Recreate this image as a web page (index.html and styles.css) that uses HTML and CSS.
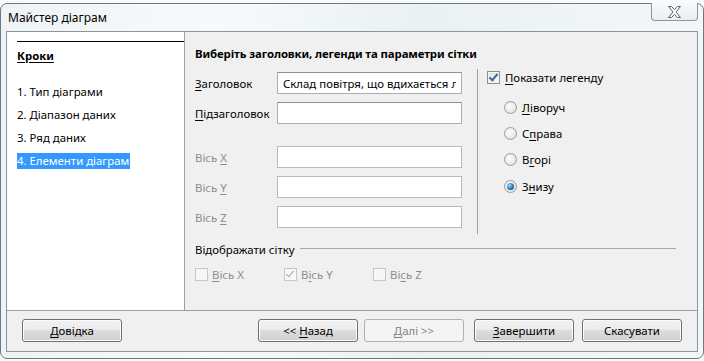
FILE: index.html
```html
<!DOCTYPE html>
<html lang="uk">
  <head>
    <meta charset="UTF-8" />
    <title>Майстер діаграм</title>
    <link rel="stylesheet" href="styles.css">
  </head>
  <body>
    <div class="window">
      <!-- Title bar -->
      <div class="titlebar">
        <span class="title">Майстер діаграм</span>
        <button class="close" aria-label="Закрити">
          <svg width="17" height="14" viewBox="0 0 17 14">
            <path d="M2.5 1.5h3l3 3.2 3-3.2h3l-4.5 5.5 4.5 5.5h-3l-3-3.2-3 3.2h-3l4.5-5.5z"
                  fill="#fff" stroke="#556070" stroke-width="1" stroke-linejoin="round" />
          </svg>
        </button>
      </div>

      <div class="client">
        <div class="main">
          <!-- Left: steps -->
          <nav class="steps">
            <h2 class="steps-title">Кроки</h2>
            <ul class="steps-list">
              <li>1. Тип діаграми</li>
              <li>2. Діапазон даних</li>
              <li>3. Ряд даних</li>
              <li><span class="current">4. Елементи діаграм</span></li>
            </ul>
          </nav>

          <!-- Right: page -->
          <section class="page">
            <h3 class="page-title">Виберіть заголовки, легенди та параметри сітки</h3>
            <div class="page-body">
              <div class="titles">
                <div class="field">
                  <label><u>З</u>аголовок</label>
                  <input type="text" value="Склад повітря, що вдихається людиною" />
                </div>
                <div class="field">
                  <label><u>П</u>ідзаголовок</label>
                  <input type="text" />
                </div>
                <div class="field field-gap disabled">
                  <label>Вісь <u>X</u></label>
                  <input type="text" disabled />
                </div>
                <div class="field disabled">
                  <label>Вісь <u>Y</u></label>
                  <input type="text" disabled />
                </div>
                <div class="field disabled">
                  <label>Вісь <u>Z</u></label>
                  <input type="text" disabled />
                </div>
              </div>

              <div class="legend">
                <div class="check-row">
                  <span class="check checked"></span>
                  <span><u>П</u>оказати легенду</span>
                </div>
                <div class="radios">
                  <div class="radio-row"><span class="radio"></span><span><u>Л</u>іворуч</span></div>
                  <div class="radio-row"><span class="radio"></span><span>С<u>п</u>рава</span></div>
                  <div class="radio-row"><span class="radio"></span><span>В<u>г</u>орі</span></div>
                  <div class="radio-row"><span class="radio on"></span><span>З<u>н</u>изу</span></div>
                </div>
              </div>
            </div>

            <div class="grid-group">
              <div class="group-head">
                <span>Відображати сітку</span>
                <span class="group-line"></span>
              </div>
              <div class="grid-checks">
                <div class="check-row disabled"><span class="check"></span><span><u>В</u>ісь X</span></div>
                <div class="check-row disabled"><span class="check checked"></span><span>В<u>і</u>сь Y</span></div>
                <div class="check-row disabled"><span class="check"></span><span>Ві<u>с</u>ь Z</span></div>
              </div>
            </div>
          </section>
        </div>

        <!-- Buttons -->
        <div class="footer">
          <button class="btn"><u>Д</u>овідка</button>
          <div class="footer-right">
            <button class="btn">&lt;&lt; <u>Н</u>азад</button>
            <button class="btn btn-next" disabled><u>Д</u>алі &gt;&gt;</button>
            <button class="btn btn-finish"><u>З</u>авершити</button>
            <button class="btn btn-cancel">Скасувати</button>
          </div>
        </div>
      </div>
    </div>
  </body>
</html>
```

FILE: styles.css
```css
* {
  margin: 0;
  padding: 0;
  box-sizing: border-box;
}

body {
  width: 704px;
  height: 361px;
  overflow: hidden;
  background: #fbfbfb;
  font-family: "Noto Sans", "Open Sans", Arial, sans-serif;
  font-size: 11.4px;
  color: #000;
}

u {
  text-decoration: underline;
  text-underline-offset: 2px;
}

/* Window frame */
.window {
  margin-top: 3px;
  width: 704px;
  height: 356px;
  border: 1px solid #6f7780;
  border-radius: 7px;
  background: linear-gradient(90deg, #eef3f5 0%, #f7fafa 30%, #eaf1f2 60%, #f4f7f8 100%);
  padding: 0 5px 6px 5px;
  display: flex;
  flex-direction: column;
}

.titlebar {
  height: 27px;
  display: flex;
  align-items: center;
  position: relative;
}

.title {
  font-size: 12px;
  padding-left: 2px;
  padding-bottom: 1px;
}

.close {
  position: absolute;
  top: -1px;
  right: 0;
  width: 47px;
  height: 18px;
  border: 1px solid #8c97a3;
  border-top: none;
  border-radius: 0 0 4px 4px;
  background: linear-gradient(#f7f9fa, #eaeff2);
  display: flex;
  align-items: center;
  justify-content: center;
}

/* Client area */
.client {
  flex: 1;
  border: 1px solid #8d949c;
  background: #f0f0f0;
  display: flex;
  flex-direction: column;
}

.main {
  flex: 1;
  display: flex;
  border-bottom: 1px solid #a0a0a0;
}

.steps {
  width: 178px;
  background: #fff;
  border-right: 1px solid #a0a0a0;
  padding: 9px 0 0 10px;
}

.steps-title {
  border-top: 1px solid #000;
  font-size: 11.4px;
  font-weight: 700;
  text-decoration: underline;
  text-underline-offset: 2px;
  padding-top: 6px;
  height: 43px;
}

.steps-list {
  list-style: none;
}

.steps-list li {
  height: 23px;
  line-height: 16px;
}

.current {
  display: inline-block;
  background: #3399ff;
  color: #fff;
  padding-right: 1px;
}

.page {
  flex: 1;
  padding: 14px 0 0 10px;
}

.page-title {
  font-size: 11.4px;
  font-weight: 700;
  letter-spacing: -0.1px;
  height: 23px;
}

.page-body {
  display: flex;
}

.titles {
  width: 282px;
  padding-top: 3px;
}

.field {
  display: flex;
  align-items: center;
  height: 22px;
  margin-bottom: 8px;
}

.field-gap {
  margin-top: 22px;
}

.field label {
  width: 82px;
}

.field input {
  width: 185px;
  height: 22px;
  border: 1px solid #abadb3;
  border-top-color: #8e9196;
  background: #fff;
  font: inherit;
  padding: 0 5px;
  color: #000;
}

.disabled {
  color: #8d8d8d;
}

.field input:disabled {
  border-color: #b7b9bd;
}

.legend {
  border-left: 1px solid #a0a0a0;
  height: 165px;
  padding: 0 0 0 9px;
}

.check-row,
.radio-row {
  display: flex;
  align-items: center;
  gap: 5px;
  height: 16px;
}

.check {
  width: 13px;
  height: 13px;
  border: 1px solid #8e8f8f;
  background: linear-gradient(135deg, #e0e0e0, #fbfbfb);
  box-shadow: inset 0 0 0 1px #f4f4f4;
  position: relative;
}

.check.checked::after {
  content: "";
  position: absolute;
  left: 3px;
  top: 0px;
  width: 3px;
  height: 7px;
  border: solid #4c61a0;
  border-width: 0 2px 2px 0;
  transform: rotate(40deg);
}

.check-row.disabled .check {
  border-color: #c6c6c6;
  background: #f7f7f7;
  box-shadow: none;
}

.check-row.disabled .check.checked::after {
  border-color: #a8a8a8;
  border-width: 0 1px 1px 0;
}

.radios {
  padding: 9px 0 0 17px;
}

.radio-row {
  height: 26.3px;
}

.radio {
  width: 13px;
  height: 13px;
  border-radius: 50%;
  border: 1px solid #9a9a9a;
  background: radial-gradient(circle at 40% 40%, #fdfdfd, #dadada);
  position: relative;
}

.radio.on::after {
  content: "";
  position: absolute;
  left: 2px;
  top: 2px;
  width: 7px;
  height: 7px;
  border-radius: 50%;
  background: radial-gradient(circle at 35% 35%, #9fdcff, #1b6fb5 60%, #0b3e7a);
}

.grid-group {
  margin-top: 5px;
  padding-right: 21px;
}

.group-head {
  display: flex;
  align-items: center;
  gap: 5px;
  height: 16px;
}

.group-line {
  flex: 1;
  border-top: 1px solid #a8a8a8;
  margin-top: -2px;
}

.grid-checks {
  display: flex;
  margin-top: 9px;
}

.grid-checks .check-row {
  width: 89px;
  gap: 4px;
}

/* Footer buttons */
.footer {
  height: 40px;
  display: flex;
  align-items: flex-start;
  justify-content: space-between;
  padding: 8px 15px 0 15px;
}

.footer-right {
  display: flex;
}

.btn {
  width: 100px;
  height: 23px;
  font: inherit;
  color: #000;
  border: 1px solid #707070;
  border-radius: 3px;
  background: linear-gradient(#f2f2f2 0%, #ebebeb 45%, #dddddd 50%, #cfcfcf 100%);
  box-shadow: inset 0 0 0 1px #fbfbfb;
}

.btn:disabled {
  border-color: #adb2b5;
  background: #f4f4f4;
  color: #838383;
  box-shadow: none;
}

.btn-next {
  margin-left: 6px;
}

.btn-finish {
  margin-left: 10px;
}

.btn-cancel {
  margin-left: 8px;
}
```
